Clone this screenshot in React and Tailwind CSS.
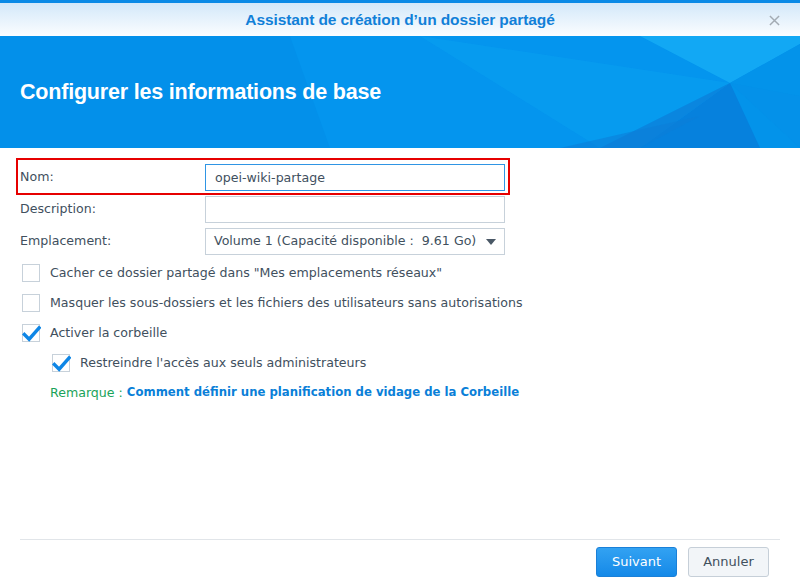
import { useState } from "react";

const Check = () => (
  <svg
    viewBox="0 0 20 20"
    className="absolute -left-[1px] top-[0px] h-[19px] w-[19px]"
  >
    <path
      d="M2.5 10 L7.5 15 L18 3"
      fill="none"
      stroke="#0e86e6"
      strokeWidth="3.6"
      strokeLinecap="square"
    />
  </svg>
);

const Checkbox = ({ checked, label }) => (
  <div className="flex h-[30px] items-center">
    <div className="relative h-[18px] w-[18px] shrink-0 border border-[#c7d1da] bg-white">
      {checked && <Check />}
    </div>
    <span className="ml-[10px]">{label}</span>
  </div>
);

const HeaderArt = () => (
  <svg
    viewBox="0 0 800 112"
    preserveAspectRatio="none"
    className="absolute inset-0 h-full w-full"
  >
    <polygon points="290,0 640,0 730,47 600,112 330,112" fill="#0495ee" />
    <polygon points="420,0 730,47 600,112" fill="#0aa0f0" opacity="0.55" />
    <polygon points="640,0 800,0 800,8 730,47" fill="#12a8f4" />
    <polygon points="730,47 800,8 800,112 760,112" fill="#0393ea" />
    <polygon points="730,47 760,112 640,112" fill="#0681dd" />
    <polygon points="600,112 730,47 640,112" fill="#0a86df" />
    <polygon points="560,112 600,112 640,112 700,80" fill="#0b7fd9" opacity="0.6" />
    <polygon points="730,47 800,60 800,112" fill="#0590e8" opacity="0.6" />
  </svg>
);

export default function App() {
  const [name, setName] = useState("opei-wiki-partage");

  return (
    <div
      className="flex h-[584px] w-[800px] flex-col bg-white text-[12.6px] text-[#41505e]"
      style={{ fontFamily: "'DejaVu Sans', Verdana, sans-serif" }}
    >
      <div className="h-[3px] bg-[#0b8ae6]" />
      <div className="relative flex h-[33px] items-center justify-center bg-gradient-to-b from-[#d3e8f9] to-[#fbfdff]">
        <span
          className="text-[15.5px] font-bold tracking-[-0.1px] text-[#1180d8]"
          style={{ fontFamily: "'Liberation Sans', Arial, sans-serif" }}
        >
          Assistant de création d’un dossier partagé
        </span>
        <svg viewBox="0 0 12 12" className="absolute right-[20px] top-[12px] h-[11px] w-[11px]">
          <path d="M1 1 L11 11 M11 1 L1 11" stroke="#a3abb3" strokeWidth="1.6" />
        </svg>
      </div>
      <div className="relative h-[112px] overflow-hidden bg-[#0390ea]">
        <HeaderArt />
        <div className="relative flex h-full items-center pl-[20px]">
          <h1
            className="text-[21.5px] font-bold tracking-[-0.2px] text-white"
            style={{ fontFamily: "'Liberation Sans', Arial, sans-serif" }}
          >
            Configurer les informations de base
          </h1>
        </div>
      </div>

      <div className="flex flex-1 flex-col px-[20px] pt-[10px]">
        <div className="-ml-[4px] flex h-[37px] w-[494px] items-center border-2 border-[#e60000] pl-[2px] pt-[2px]">
          <span className="w-[185px]">Nom:</span>
          <input
            value={name}
            onChange={(e) => setName(e.target.value)}
            className="h-[27px] w-[300px] border border-[#2f95e4] px-[9px] text-[12.6px] text-[#41505e] outline-none"
          />
        </div>
        <div className="mt-[1px] flex h-[27px] items-center">
          <span className="w-[185px]">Description:</span>
          <input className="h-[27px] w-[300px] border border-[#c7d1da] px-[9px] outline-none" />
        </div>
        <div className="mt-[5px] flex h-[27px] items-center">
          <span className="w-[185px]">Emplacement:</span>
          <div className="flex h-[27px] w-[300px] items-center justify-between border border-[#c7d1da] pl-[8px] pr-[8px]">
            <span>Volume 1 (Capacité disponible :&nbsp; 9.61 Go)</span>
            <svg viewBox="0 0 10 6" className="h-[6px] w-[10px]">
              <polygon points="0,0 10,0 5,6" fill="#4a5866" />
            </svg>
          </div>
        </div>

        <div className="mt-[3px] pl-[2px]">
          <Checkbox label={'Cacher ce dossier partagé dans "Mes emplacements réseaux"'} />
          <Checkbox label="Masquer les sous-dossiers et les fichiers des utilisateurs sans autorisations" />
          <Checkbox checked label="Activer la corbeille" />
          <div className="pl-[30px]">
            <Checkbox checked label="Restreindre l'accès aux seuls administrateurs" />
          </div>
          <div className="flex h-[30px] items-center pl-[28px]">
            <span className="text-[#1aa35a]">Remarque :</span>
            <span className="ml-[4px] text-[11.7px] font-bold text-[#0a7fd8]">
              Comment définir une planification de vidage de la Corbeille
            </span>
          </div>
        </div>

        <div className="mt-auto border-t border-[#e1e5e9]" />
        <div className="flex h-[44px] items-center justify-end gap-[11px] pr-[11px]">
          <button className="h-[30px] w-[81px] rounded-[3px] border border-[#1a80d8] bg-gradient-to-b from-[#32a2f2] to-[#1389e8] text-[13px] text-white">
            Suivant
          </button>
          <button className="h-[30px] w-[81px] rounded-[3px] border border-[#c6cfd8] bg-[#f2f5f8] text-[13px] text-[#41505e]">
            Annuler
          </button>
        </div>
      </div>
    </div>
  );
}
